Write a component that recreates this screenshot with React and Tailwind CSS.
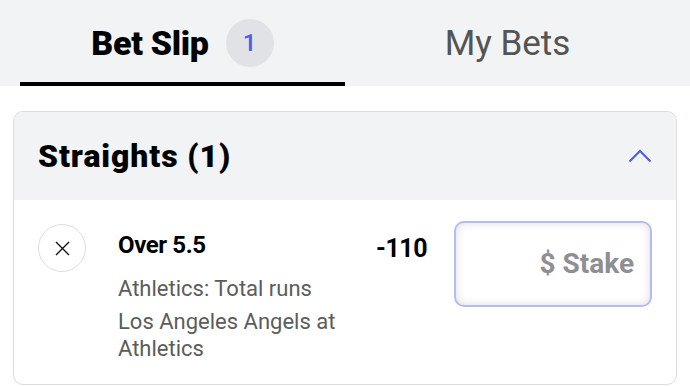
import React from "react";

export default function App() {
  return (
    <div className="w-[690px] h-[386px] overflow-hidden bg-white font-['Roboto',sans-serif] text-black">
      {/* tabs */}
      <div className="h-[86px] bg-[#f2f3f5] px-[20px] flex">
        <button className="flex-1 flex items-center justify-center gap-[17px] border-b-[4px] border-black pt-[4px]">
          <span className="text-[34px] font-black leading-none tracking-[-0.3px]">Bet Slip</span>
          <span className="w-[48px] h-[48px] rounded-full bg-[#e1e2e5] flex items-center justify-center text-[24px] font-medium text-[#4b5ce6]">
            1
          </span>
        </button>
        <button className="flex-1 flex items-center justify-center border-b-[4px] border-transparent pt-[4px]">
          <span className="text-[35px] leading-none text-[#545454]">My Bets</span>
        </button>
      </div>

      {/* straights card */}
      <div className="mx-[13px] mt-[25px] border-[1.5px] border-[#dcdde1] rounded-[10px] overflow-hidden">
        <div className="h-[88px] bg-[#f2f3f5] flex items-center justify-between px-[24px]">
          <h2 className="text-[32px] font-black leading-none tracking-[0.9px]">Straights (1)</h2>
          <svg width="24" height="14" viewBox="0 0 24 14" fill="none">
            <path d="M1.5 12.5 L12 2 L22.5 12.5" stroke="#4b5ce6" strokeWidth="2" />
          </svg>
        </div>

        <div className="flex items-start pl-[24px] pr-[24px] pt-[24px] pb-[22px]">
          <button className="w-[48px] h-[48px] shrink-0 rounded-full border-[1.5px] border-[#dcdde3] flex items-center justify-center">
            <svg width="15" height="15" viewBox="0 0 15 15" fill="none">
              <path d="M1 1 L14 14 M14 1 L1 14" stroke="#111" strokeWidth="1.4" />
            </svg>
          </button>

          <div className="ml-[32px] flex-1 pt-[6px]">
            <div className="text-[24px] font-bold leading-[30px] tracking-[-0.4px]">Over 5.5</div>
            <div className="mt-[15px] text-[22px] leading-[27px] text-[#5c5c5c]">Athletics: Total runs</div>
            <div className="mt-[6px] text-[22px] leading-[27px] text-[#5c5c5c] w-[240px]">
              Los Angeles Angels at Athletics
            </div>
          </div>

          <div className="pt-[10px] text-[25px] font-bold leading-[30px] tracking-[-0.5px] mr-[27px]">-110</div>

          <div className="w-[198px] h-[86px] -mt-[3px] rounded-[10px] border-2 border-[#b5bbf5] shadow-[inset_0_0_9px_rgba(0,0,0,0.14)] flex items-center justify-end pr-[16px]">
            <span className="text-[28px] font-bold text-[#8e8e93]">$ Stake</span>
          </div>
        </div>
      </div>
    </div>
  );
}
